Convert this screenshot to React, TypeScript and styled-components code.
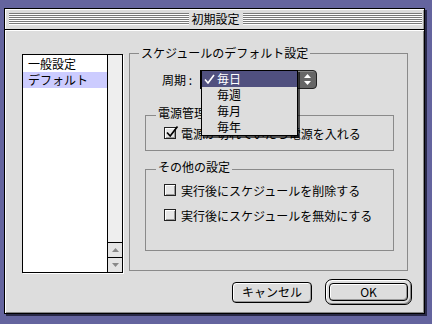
import React from 'react';
import styled, { createGlobalStyle } from 'styled-components';

const GlobalStyle = createGlobalStyle`
  * { box-sizing: border-box; }
  html, body { margin: 0; padding: 0; }
  body {
    font-family: "Noto Sans CJK JP", "Noto Sans", sans-serif;
    font-size: 12px;
    color: #000;
  }
`;

const cycles = ['毎日', '毎週', '毎月', '毎年'];

function CheckBox({ checked }: { checked?: boolean }) {
  return (
    <Box>
      {checked && (
        <CheckMark width="14" height="14" viewBox="0 0 14 14">
          <path d="M2 7.5 L5.2 11 L12.5 1.5" fill="none" stroke="#000" strokeWidth="1.7" />
        </CheckMark>
      )}
    </Box>
  );
}

function App() {
  return (
    <Desktop>
      <GlobalStyle />
      <Window>
        <TitleBar>
          <Stripes />
          <Title>初期設定</Title>
          <Stripes />
        </TitleBar>

        <Body>
          <MainRow>
            <ListBox>
              <ListItems>
                <ListItem>一般設定</ListItem>
                <ListItem $selected>デフォルト</ListItem>
              </ListItems>
              <ScrollBar>
                <ScrollArrow>
                  <svg width="7" height="4" viewBox="0 0 7 4">
                    <polygon points="3.5,0 7,4 0,4" fill="#888" />
                  </svg>
                </ScrollArrow>
                <ScrollArrow>
                  <svg width="7" height="4" viewBox="0 0 7 4">
                    <polygon points="0,0 7,0 3.5,4" fill="#888" />
                  </svg>
                </ScrollArrow>
              </ScrollBar>
            </ListBox>

            <Group $main>
              <Legend>スケジュールのデフォルト設定</Legend>

              <CycleRow>
                <CycleLabel>周期 :</CycleLabel>
                <Popup>
                  <PopupField />
                  <PopupArrows>
                    <svg width="7" height="11" viewBox="0 0 7 11">
                      <polygon points="3.5,0 7,4 0,4" fill="#fff" />
                      <polygon points="0,7 7,7 3.5,11" fill="#fff" />
                    </svg>
                  </PopupArrows>
                  <Menu>
                    {cycles.map((c, i) => (
                      <MenuItem key={c} $selected={i === 0}>
                        <CheckSlot>
                          {i === 0 && (
                            <svg width="11" height="10" viewBox="0 0 11 10">
                              <path d="M1 5.5 L4 9 L10 1" fill="none" stroke="#fff" strokeWidth="1.6" />
                            </svg>
                          )}
                        </CheckSlot>
                        {c}
                      </MenuItem>
                    ))}
                  </Menu>
                </Popup>
              </CycleRow>

              <Group $sub>
                <Legend $sub>電源管理</Legend>
                <GroupBody $top={2} $bottom={10}>
                  <CheckRow>
                    <CheckBox checked />
                    電源が切れていたら電源を入れる
                  </CheckRow>
                </GroupBody>
              </Group>

              <Group $sub $gap={9}>
                <Legend $sub>その他の設定</Legend>
                <GroupBody $top={5} $bottom={28}>
                  <CheckRow>
                    <CheckBox />
                    実行後にスケジュールを削除する
                  </CheckRow>
                  <CheckRow>
                    <CheckBox />
                    実行後にスケジュールを無効にする
                  </CheckRow>
                </GroupBody>
              </Group>
            </Group>
          </MainRow>

          <Footer>
            <Button>キャンセル</Button>
            <DefaultRing>
              <Button $inner>OK</Button>
            </DefaultRing>
          </Footer>
        </Body>
      </Window>
    </Desktop>
  );
}

export default App;

const Desktop = styled.div`
  width: 432px;
  height: 324px;
  overflow: hidden;
  padding: 8px 0 0 4px;
  background-color: #64649e;
`;

const Window = styled.div`
  width: 421px;
  height: 306px;
  display: flex;
  flex-direction: column;
  border: 1px solid #000;
  background-color: #dddddd;
  box-shadow: 2px 2px 0 rgba(20, 20, 40, 0.75);
`;

const TitleBar = styled.div`
  flex: none;
  height: 21px;
  display: flex;
  align-items: center;
  padding: 0 2px 0 4px;
  border-bottom: 1px solid #000;
  background-color: #dddddd;
  box-shadow: inset 1px 1px 0 #fff, inset -1px 0 0 #999;
`;

const Stripes = styled.div`
  flex: 1;
  height: 12px;
  background: repeating-linear-gradient(to bottom, #7a7a7a 0 1px, #ffffff 1px 2px);
`;

const Title = styled.div`
  padding: 0 3px;
  line-height: 14px;
`;

const Body = styled.div`
  flex: 1;
  display: flex;
  flex-direction: column;
  padding: 16px 0 0 17px;
  box-shadow: inset 1px 1px 0 #fff, inset -1px -1px 0 #888;
`;

const MainRow = styled.div`
  display: flex;
  align-items: flex-start;
  gap: 6px;
`;

const ListBox = styled.div`
  margin-top: 8px;
  width: 101px;
  height: 219px;
  display: flex;
  border: 1px solid #000;
  background-color: #fff;
  box-shadow: 1px 1px 0 #fff;
`;

const ListItems = styled.div`
  flex: 1;
  padding-top: 1px;
`;

const ListItem = styled.div<{ $selected?: boolean }>`
  height: 16px;
  line-height: 16px;
  padding-left: 5px;
  white-space: nowrap;
  background-color: ${({ $selected }) => ($selected ? '#ccccff' : 'transparent')};
`;

const ScrollBar = styled.div`
  width: 15px;
  display: flex;
  flex-direction: column;
  justify-content: flex-end;
  border-left: 1px solid #000;
  background-color: #eeeeee;
`;

const ScrollArrow = styled.div`
  height: 15px;
  display: flex;
  align-items: center;
  justify-content: center;
  border-top: 1px solid #000;
  background-color: #e4e4e4;
`;

const Group = styled.fieldset<{ $main?: boolean; $sub?: boolean; $gap?: number }>`
  min-width: 0;
  margin: ${({ $sub, $gap }) => ($sub ? `${$gap ?? 17}px 13px 0 15px` : '0')};
  padding: 0 0 ${({ $main }) => ($main ? '19px' : '0')};
  width: ${({ $main }) => ($main ? '279px' : 'auto')};
  border: 1px solid #8a8a8a;
`;

const Legend = styled.legend<{ $sub?: boolean }>`
  margin-left: ${({ $sub }) => ($sub ? '10px' : '9px')};
  padding: 0 2px ${({ $sub }) => ($sub ? '4px' : '0')};
  line-height: 14px;
  font-size: 12px;
  white-space: nowrap;
`;

const GroupBody = styled.div<{ $top: number; $bottom: number }>`
  display: flex;
  flex-direction: column;
  gap: 11px;
  padding: ${({ $top, $bottom }) => `${$top}px 0 ${$bottom}px 18px`};
`;

const CycleRow = styled.div`
  margin-top: 10px;
  height: 19px;
  display: flex;
  align-items: center;
  padding-left: 32px;
`;

const CycleLabel = styled.div`
  width: 38px;
  white-space: nowrap;
`;

const Popup = styled.div`
  position: relative;
  width: 117px;
  height: 19px;
  display: flex;
`;

const PopupField = styled.div`
  flex: 1;
  border: 1px solid #000;
  border-right: none;
  background-color: #fff;
`;

const PopupArrows = styled.div`
  width: 20px;
  display: flex;
  align-items: center;
  justify-content: center;
  border: 1px solid #222;
  border-radius: 0 4px 4px 0;
  background-color: #666;
  box-shadow: inset 1px 1px 0 #888;
`;

const Menu = styled.div`
  position: absolute;
  left: 1px;
  top: 0;
  z-index: 2;
  width: 97px;
  border: 1px solid #000;
  background-color: #dddddd;
  box-shadow: 2px 2px 0 rgba(0, 0, 0, 0.65);
`;

const MenuItem = styled.div<{ $selected?: boolean }>`
  height: 16px;
  display: flex;
  align-items: center;
  line-height: 16px;
  color: ${({ $selected }) => ($selected ? '#fff' : '#000')};
  background-color: ${({ $selected }) => ($selected ? '#50507f' : 'transparent')};
`;

const CheckSlot = styled.span`
  width: 15px;
  flex: none;
  display: flex;
  align-items: center;
  justify-content: center;
`;

const CheckRow = styled.div`
  height: 14px;
  display: flex;
  align-items: center;
  gap: 5px;
  white-space: nowrap;
`;

const Box = styled.span`
  position: relative;
  flex: none;
  width: 12px;
  height: 12px;
  border: 1px solid #222;
  background-color: #e6e6e6;
  box-shadow: inset 1px 1px 0 #fff, inset -1px -1px 0 #999;
`;

const CheckMark = styled.svg`
  position: absolute;
  left: 0;
  top: -3px;
`;

const Footer = styled.div`
  margin-top: 6px;
  padding-right: 12px;
  display: flex;
  justify-content: flex-end;
  align-items: center;
  gap: 13px;
`;

const Button = styled.button<{ $inner?: boolean }>`
  width: ${({ $inner }) => ($inner ? '79px' : '80px')};
  height: ${({ $inner }) => ($inner ? '18px' : '21px')};
  padding: 0;
  border: 1px solid #000;
  border-radius: 4px;
  background-color: #dddddd;
  box-shadow: inset 1px 1px 0 #fff, inset -1px -1px 0 #999;
  font-family: inherit;
  font-size: 12px;
  line-height: 14px;
  color: #000;
`;

const DefaultRing = styled.div`
  width: 87px;
  height: 26px;
  padding: 3px;
  border: 1px solid #000;
  border-radius: 7px;
  background-color: #dddddd;
  box-shadow: inset 1px 1px 0 #fff, inset -1px -1px 0 #888;
`;
